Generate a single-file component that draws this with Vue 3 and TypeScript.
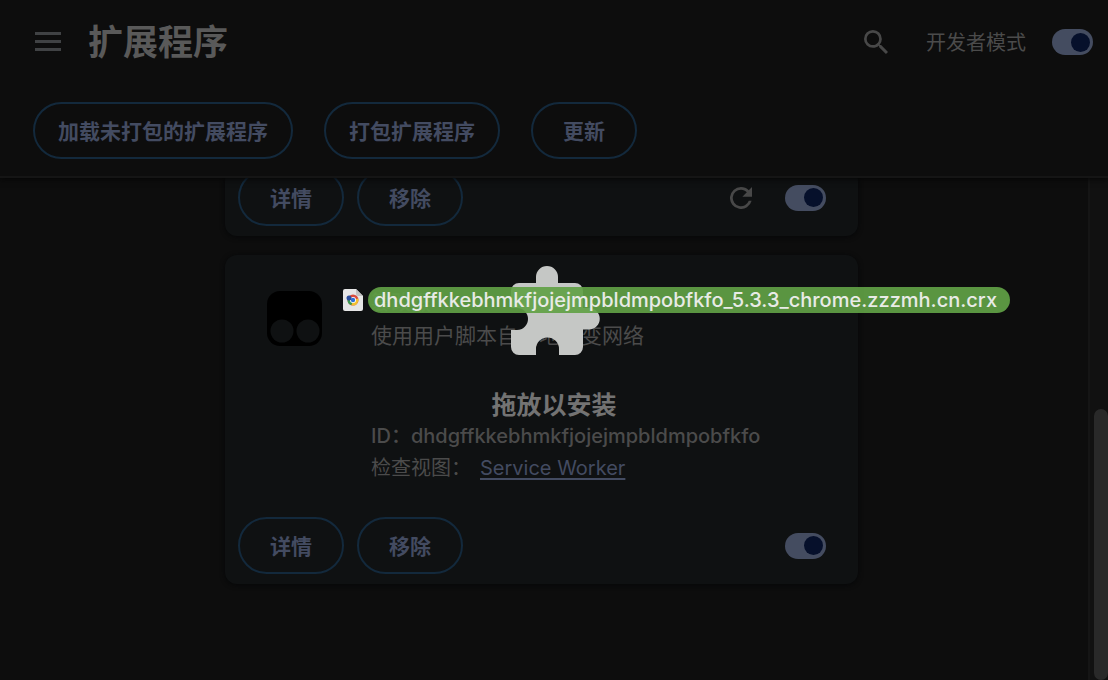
<script setup lang="ts">
import { ref } from 'vue'

const devMode = ref(true)
const extensionId = 'dhdgffkkebhmkfjojejmpbldmpobfkfo'
const toolbar: string[] = ['加载未打包的扩展程序', '打包扩展程序', '更新']
const enabled = ref<boolean[]>([true, true])
</script>

<template>
  <div class="page">
    <header class="header">
      <div class="titlebar">
        <button class="icon-btn menu" aria-label="主菜单">
          <svg width="26" height="20" viewBox="0 0 26 20"><path d="M0 0h26v3H0zM0 8h26v3H0zM0 16h26v3H0z" fill="currentColor" /></svg>
        </button>
        <h1>扩展程序</h1>
        <button class="icon-btn search" aria-label="搜索">
          <svg width="24" height="24" viewBox="3 3 17.49 17.49"><path fill="currentColor" d="M15.5 14h-.79l-.28-.27A6.47 6.47 0 0 0 16 9.5 6.5 6.5 0 1 0 9.5 16c1.61 0 3.09-.59 4.23-1.57l.27.28v.79l5 4.99L20.490 19l-4.990-5zm-6 0C7.010 14 5 11.990 5 9.500S7.010 5 9.500 5 14 7.010 14 9.500 11.990 14 9.500 14z" /></svg>
        </button>
        <label class="dev" for="dev-mode">开发者模式</label>
        <input id="dev-mode" v-model="devMode" class="switch" type="checkbox" role="switch" />
      </div>
      <div class="tools">
        <button v-for="t in toolbar" :key="t" class="pill">{{ t }}</button>
      </div>
    </header>

    <div class="body">
      <main class="list">
        <article class="card">
          <div class="actions">
            <button class="pill">详情</button>
            <button class="pill">移除</button>
            <button class="icon-btn reload" aria-label="重新加载">
              <svg width="22" height="22" viewBox="4 4 16 16"><path fill="currentColor" d="M17.650 6.350A7.958 7.958 0 0 0 12 4a8 8 0 1 0 7.730 10h-2.080A6 6 0 1 1 12 6c1.660 0 3.140.69 4.220 1.780L13 11h7V4z" /></svg>
            </button>
            <input v-model="enabled[0]" class="switch" type="checkbox" role="switch" aria-label="启用" />
          </div>
        </article>
        <article class="card">
          <div class="info">
            <svg class="logo" width="55" height="55" viewBox="0 0 55 55">
              <rect width="55" height="55" rx="13" fill="#000" />
              <circle cx="15" cy="40" r="11.5" fill="#0f1112" />
              <circle cx="41" cy="40" r="11.5" fill="#0f1112" />
            </svg>
            <div class="text">
              <h2>篡改猴</h2>
              <p class="desc">使用用户脚本自由地改变网络</p>
              <p class="ident">ID：{{ extensionId }}</p>
              <p class="views">检查视图：<a href="#">Service Worker</a></p>
            </div>
          </div>
          <div class="actions">
            <button class="pill">详情</button>
            <button class="pill">移除</button>
            <input v-model="enabled[1]" class="switch last" type="checkbox" role="switch" aria-label="启用篡改猴" />
          </div>
        </article>
      </main>
      <div class="track"><div class="thumb"></div></div>
    </div>

    <div class="drop">
      <svg class="puzzle" width="92" height="89" viewBox="-3 0 92 89">
        <path fill="#c5c7c5" d="M25 17V11a11 11 0 0 1 22 0v6h17a8 8 0 0 1 8 8v17h6a10.750 10.750 0 0 1 0 21.500h-6V81a8 8 0 0 1-8 8H48v-6a11.500 11.500 0 0 0-23 0v6H8a8 8 0 0 1-8-8V64h6a11 11 0 0 0 0-22H0V25a8 8 0 0 1 8-8z" />
      </svg>
      <strong>拖放以安装</strong>
    </div>

    <div class="drag">
      <svg width="20" height="24" viewBox="0 0 20 24">
        <path d="M2 1h11l7 7v13a2 2 0 0 1-2 2H2a2 2 0 0 1-2-2V3a2 2 0 0 1 2-2z" fill="#e6e6e6" />
        <path d="M13 1l7 7h-5a2 2 0 0 1-2-2z" fill="#c2c2c2" />
        <circle cx="10" cy="12" r="5.500" fill="#d94b3d" />
        <path d="M10 12L4.500 12a5.500 5.500 0 0 0 4 5.300z" fill="#3a9a50" />
        <path d="M10 12l5.300-1.500A5.500 5.500 0 0 1 8.500 17.300z" fill="#f2c230" />
        <circle cx="10" cy="12" r="3" fill="#fff" />
        <circle cx="10" cy="12" r="2.200" fill="#2f6fd6" />
        <circle cx="6" cy="10" r="2.500" fill="#2b4c9b" />
      </svg>
      <span>{{ extensionId }}_5.3.3_chrome.zzzmh.cn.crx</span>
    </div>
  </div>
</template>

<style>
html,
body {
  background: #0d0d0d;
}
</style>

<style scoped>
* {
  box-sizing: border-box;
}
.page {
  position: relative;
  display: flex;
  flex-direction: column;
  height: 100vh;
  overflow: hidden;
  background: #0d0d0d;
  color: #4b4b4b;
  font: 20px/32px Inter, "Noto Sans CJK SC", sans-serif;
}
h1,
h2,
p {
  margin: 0;
}
button {
  font: inherit;
  background: none;
  padding: 0;
  border: 0;
}
svg {
  display: block;
}
.header {
  position: relative;
  flex: none;
  border-bottom: 2px solid #151515;
  background: #0d0d0d;
  box-shadow: 0 1px 6px #050505;
  z-index: 1;
}
.titlebar {
  display: flex;
  align-items: center;
  height: 84px;
  padding: 0 15px 0 35px;
}
.icon-btn {
  color: #484848;
}
.menu {
  color: #404244;
}
h1 {
  flex: 1;
  margin-left: 27px;
  font-size: 35px;
  line-height: 48px;
  font-weight: 700;
  color: #595959;
}
.dev {
  margin: 0 26px 0 38px;
  padding-top: 2px;
}
.switch {
  appearance: none;
  flex: none;
  display: flex;
  align-items: center;
  width: 41px;
  height: 26px;
  margin: 0;
  padding: 3px;
  border-radius: 13px;
  background: #444c60;
}
.switch::before {
  content: "";
  width: 19px;
  height: 19px;
  border-radius: 50%;
  background: #06102b;
}
.switch:checked {
  justify-content: flex-end;
}
.tools {
  display: flex;
  gap: 31px;
  padding: 18px 33px 17px;
}
.pill {
  min-width: 106px;
  height: 57px;
  padding: 2px 23px 0;
  border: 2px solid #13293c;
  border-radius: 29px;
  color: #434b61;
  font-size: 21px;
  font-weight: 700;
  white-space: nowrap;
}
.body {
  flex: 1;
  min-height: 0;
  display: flex;
}
.list {
  flex: 1;
  display: flex;
  flex-direction: column;
  justify-content: flex-end;
  align-items: center;
  gap: 19px;
  padding: 0 5px 96px 0;
  min-height: 0;
}
.card {
  flex: none;
  width: 633px;
  max-width: 100%;
  border-radius: 12px;
  background: #0f1112;
  box-shadow: 0 1px 5px #060708;
}
.info {
  display: flex;
  align-items: flex-start;
  gap: 49px;
  padding: 31px 42px 0;
}
.logo {
  margin-top: 5px;
}
h2 {
  font-size: 20px;
  line-height: 34px;
  font-weight: 500;
}
.desc {
  margin-bottom: 68px;
  font-size: 21px;
}
.ident {
  font-weight: 500;
}
.views a {
  margin-left: 9px;
  color: #434b61;
  text-underline-offset: 3px;
}
.actions {
  display: flex;
  align-items: center;
  gap: 13px;
  padding: 0 32px 10px 13px;
}
.info + .actions {
  padding-top: 33px;
}
.reload {
  margin-left: auto;
  margin-right: 20px;
}
.last {
  margin-left: auto;
}
.track {
  width: 20px;
  border-left: 2px solid #151515;
  background: #111;
  display: flex;
  align-items: flex-end;
  justify-content: flex-end;
}
.thumb {
  width: 14px;
  height: 54%;
  border-radius: 7px;
  background: #292929;
}
.drop {
  position: absolute;
  z-index: 2;
  inset: 266px 0 auto;
  display: flex;
  flex-direction: column;
  align-items: center;
  gap: 32px;
  pointer-events: none;
}
.drop strong {
  font-size: 25px;
  line-height: 36px;
  font-weight: 700;
  color: #737373;
}
.drag {
  position: absolute;
  z-index: 3;
  left: 343px;
  top: 287px;
  display: flex;
  align-items: center;
  gap: 5px;
  pointer-events: none;
}
.drag span {
  padding: 1px 13px 0 6px;
  border-radius: 13px;
  line-height: 25px;
  font-weight: 500;
  color: #e8ebe6;
  background: rgba(97, 161, 69, 0.92);
}
</style>
